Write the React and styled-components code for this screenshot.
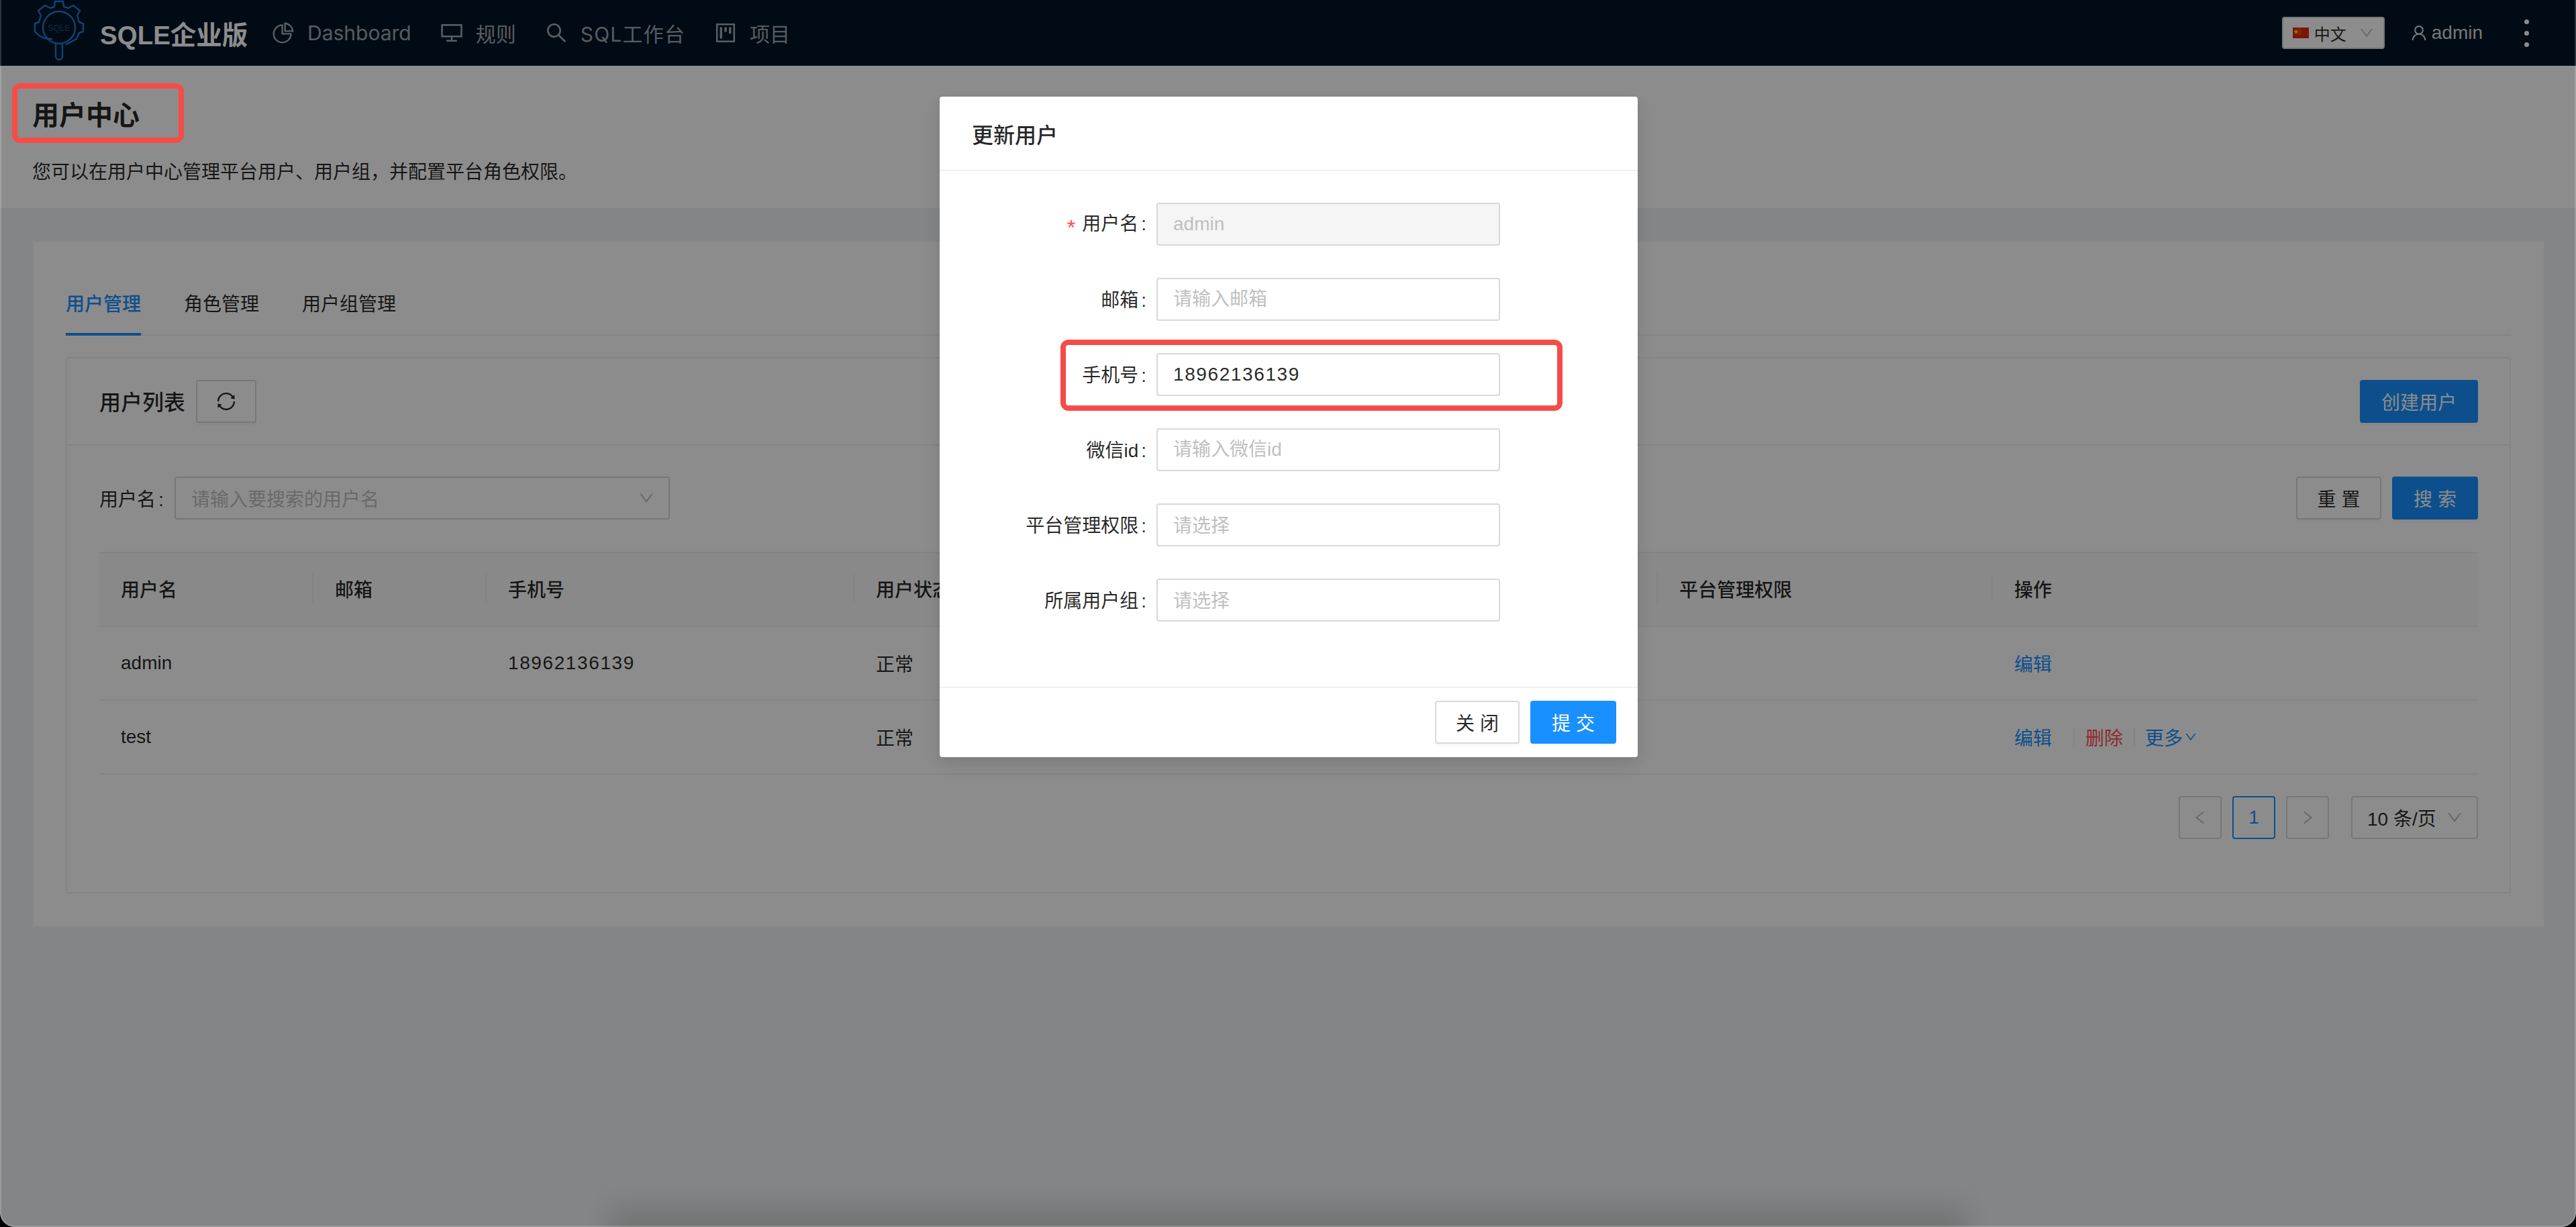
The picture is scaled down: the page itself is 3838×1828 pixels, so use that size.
import React from "react";
import styled, { createGlobalStyle } from "styled-components";
import {
  AiOutlinePieChart,
  AiOutlineDesktop,
  AiOutlineSearch,
  AiOutlineProject,
  AiOutlineUser,
  AiOutlineSync,
  AiOutlineDown,
  AiOutlineLeft,
  AiOutlineRight,
} from "react-icons/ai";

const GlobalStyle = createGlobalStyle`
  html, body {
    margin: 0;
    padding: 0;
    background: #000;
  }
  * {
    box-sizing: border-box;
  }
  body {
    font-family: "Liberation Sans", "Noto Sans CJK SC", sans-serif;
    font-size: 28px;
    color: rgba(0, 0, 0, 0.85);
  }
`;

const Page = styled.div`
  position: relative;
  width: 3838px;
  height: 1828px;
  overflow: hidden;
  background: #f0f2f5;
  border-radius: 0 0 22px 22px;
`;

const Header = styled.header`
  height: 98px;
  background: #001529;
  display: flex;
  align-items: center;
  padding: 0 70px 0 48px;
`;

const Brand = styled.div`
  display: flex;
  align-items: center;
  gap: 21px;
  width: 356px;
  font-size: 38.5px;
  font-weight: 700;
  color: #fff;
  white-space: nowrap;
  svg {
    margin-top: -6px;
  }
`;

const Nav = styled.nav`
  display: flex;
  align-items: center;
  gap: 42px;
`;

const NavItem = styled.div`
  display: flex;
  align-items: center;
  gap: 18px;
  font-family: Inter, "Noto Sans CJK SC", sans-serif;
  font-size: 30px;
  letter-spacing: ${({ $tracking }) => $tracking || 0}px;
  color: rgba(255, 255, 255, 0.65);
  white-space: nowrap;
  svg {
    font-size: 36px;
  }
`;

const HeaderRight = styled.div`
  margin-left: auto;
  display: flex;
  align-items: center;
`;

const LangSelect = styled.div`
  width: 153px;
  height: 48px;
  background: #fff;
  border: 2px solid #d9d9d9;
  border-radius: 4px;
  display: flex;
  align-items: center;
  padding-left: 14px;
  font-size: 24px;
  color: rgba(0, 0, 0, 0.85);
  gap: 8px;
  svg.chevron {
    margin-left: 10px;
    font-size: 24px;
    color: #bfbfbf;
  }
`;

const UserInfo = styled.div`
  margin-left: 37px;
  display: flex;
  align-items: center;
  gap: 5px;
  font-size: 28px;
  color: rgba(255, 255, 255, 0.85);
  svg {
    font-size: 28px;
  }
`;

const MoreDots = styled.div`
  margin-left: 62px;
  display: flex;
  flex-direction: column;
  gap: 10px;
  span {
    width: 7px;
    height: 7px;
    border-radius: 50%;
    background: #fff;
  }
`;

const PageHeader = styled.section`
  height: 212px;
  background: #fff;
  padding: 50px 48px 0;
`;

const PageTitle = styled.h1`
  margin: 0;
  font-size: 40px;
  line-height: 48px;
  font-weight: 600;
`;

const PageDesc = styled.p`
  margin: 39px 0 0;
  font-size: 28px;
  line-height: 44px;
  color: rgba(0, 0, 0, 0.85);
`;

const Content = styled.main`
  padding: 50px 48px 0 50px;
`;

const Card = styled.section`
  height: 1020px;
  background: #fff;
  padding: 0 49px 0 48px;
`;

const Tabs = styled.div`
  height: 140px;
  display: flex;
  gap: 64px;
  align-items: flex-end;
  border-bottom: 2px solid #f0f0f0;
`;

const Tab = styled.div`
  height: 70px;
  margin-bottom: -2px;
  font-size: 28px;
  line-height: 48px;
  color: ${({ $active }) => ($active ? "#1890ff" : "rgba(0,0,0,.85)")};
  font-weight: ${({ $active }) => ($active ? 500 : 400)};
  border-bottom: 4px solid ${({ $active }) => ($active ? "#1890ff" : "transparent")};
`;

const InnerCard = styled.div`
  margin-top: 32px;
  height: 799px;
  border: 2px solid #f0f0f0;
  border-radius: 4px;
`;

const InnerHead = styled.div`
  height: 130px;
  padding: 0 47px 0 48px;
  display: flex;
  align-items: center;
  border-bottom: 2px solid #f0f0f0;
`;

const InnerTitle = styled.div`
  font-size: 32px;
  font-weight: 500;
  margin: -3px 16px 0 0;
`;

const Button = styled.div`
  height: 64px;
  width: ${({ $w }) => $w}px;
  display: flex;
  align-items: center;
  justify-content: center;
  border-radius: 4px;
  font-size: 28px;
  white-space: nowrap;
  border: 2px solid ${({ $primary }) => ($primary ? "#1890ff" : "#d9d9d9")};
  background: ${({ $primary }) => ($primary ? "#1890ff" : "#fff")};
  color: ${({ $primary }) => ($primary ? "#fff" : "rgba(0,0,0,.85)")};
  box-shadow: 0 4px 0 rgba(0, 0, 0, 0.02);
  svg {
    font-size: 32px;
  }
`;

const CreateButton = styled(Button)`
  margin-left: auto;
`;

const InnerBody = styled.div`
  padding: 46px 47px 0 48px;
`;

const FilterRow = styled.div`
  display: flex;
  align-items: center;
  height: 64px;
  gap: 16px;
`;

const FilterLabel = styled.div`
  width: 96px;
  font-size: 28px;
  white-space: nowrap;
  &::after {
    content: ":";
    margin-left: 4px;
  }
`;

const SelectBox = styled.div`
  width: 738px;
  height: 64px;
  border: 2px solid #d9d9d9;
  border-radius: 4px;
  display: flex;
  align-items: center;
  justify-content: space-between;
  padding: 0 20px 0 23px;
  color: #bfbfbf;
  font-size: 28px;
  svg {
    font-size: 26px;
  }
`;

const FilterActions = styled.div`
  margin-left: auto;
  display: flex;
  gap: 16px;
`;

const Table = styled.div`
  margin-top: 48px;
  border-top: 2px solid #f0f0f0;
`;

const TableRow = styled.div`
  display: grid;
  grid-template-columns: 319px 258px 548px 1197px 499px 723px;
  height: 110px;
  align-items: center;
  background: ${({ $head }) => ($head ? "#fafafa" : "transparent")};
  border-bottom: 2px solid #f0f0f0;
  font-weight: ${({ $head }) => ($head ? 500 : 400)};
`;

const Cell = styled.div`
  position: relative;
  padding-left: 32px;
  font-size: 28px;
  white-space: nowrap;
  display: flex;
  align-items: center;
`;

const HeadCell = styled(Cell)`
  margin-top: -3px;
  ${({ $sep }) =>
    $sep
      ? `&::before {
    content: "";
    position: absolute;
    left: -2px;
    top: -3px;
    width: 2px;
    height: 44px;
    background: #f0f0f0;
  }`
      : ""}
`;

const PhoneText = styled.span`
  letter-spacing: 1.6px;
`;

const ActionLink = styled.span`
  color: ${({ $danger }) => ($danger ? "#ff4d4f" : "#1890ff")};
  display: inline-flex;
  align-items: center;
  svg {
    font-size: 20px;
    margin-left: 2px;
  }
`;

const ActionDivider = styled.span`
  width: 2px;
  height: 26px;
  background: #f0f0f0;
  margin: 0 16px 0 32px;
`;

const ActionDividerTight = styled(ActionDivider)`
  margin: 0 15px 0 16px;
`;

const Pagination = styled.div`
  margin-top: 32px;
  display: flex;
  justify-content: flex-end;
  align-items: center;
`;

const PageBox = styled.div`
  width: 64px;
  height: 64px;
  margin-right: 16px;
  border-radius: 4px;
  display: flex;
  align-items: center;
  justify-content: center;
  border: 2px solid ${({ $active }) => ($active ? "#1890ff" : "#d9d9d9")};
  color: ${({ $active }) => ($active ? "#1890ff" : "#bfbfbf")};
  font-weight: ${({ $active }) => ($active ? 500 : 400)};
  font-size: 28px;
  svg {
    font-size: 26px;
  }
`;

const PageSize = styled.div`
  margin-left: 17px;
  width: 189px;
  height: 64px;
  border: 2px solid #d9d9d9;
  border-radius: 4px;
  display: flex;
  align-items: center;
  justify-content: space-between;
  padding: 0 20px 0 22px;
  font-size: 28px;
  svg {
    font-size: 26px;
    color: #bfbfbf;
  }
`;

const Mask = styled.div`
  position: absolute;
  inset: 0;
  background: rgba(0, 0, 0, 0.45);
  display: flex;
  justify-content: center;
  align-items: flex-start;
  padding: 144px 0 0 2px;
`;

const Modal = styled.div`
  width: 1040px;
  height: 984px;
  background: #fff;
  border-radius: 4px;
  display: flex;
  flex-direction: column;
  box-shadow: 0 6px 16px rgba(0, 0, 0, 0.08), 0 12px 32px rgba(0, 0, 0, 0.05);
`;

const ModalHead = styled.div`
  height: 111px;
  padding: 0 48px;
  display: flex;
  align-items: center;
  font-size: 32px;
  font-weight: 500;
  border-bottom: 2px solid #f0f0f0;
`;

const ModalForm = styled.div`
  flex: 1;
  padding-top: 47px;
  display: flex;
  flex-direction: column;
  gap: 48px;
`;

const FormRow = styled.div`
  display: flex;
  align-items: center;
  height: 64px;
`;

const FormLabel = styled.div`
  width: 308px;
  margin: -2px 15px 0 0;
  text-align: right;
  font-size: 28px;
  white-space: nowrap;
  &::after {
    content: ":";
    margin-left: 4px;
  }
`;

const Required = styled.span`
  display: inline-block;
  vertical-align: -7px;
  line-height: 1;
  color: #ff4d4f;
  margin-right: 10px;
  font-size: 32px;
`;

const TextInput = styled.input`
  width: 512px;
  height: 64px;
  padding: 0 23px;
  border: 2px solid #d9d9d9;
  border-radius: 4px;
  outline: none;
  font: inherit;
  font-size: 28px;
  letter-spacing: ${({ $tracking }) => $tracking || 0}px;
  color: rgba(0, 0, 0, 0.85);
  background: #fff;
  &::placeholder {
    color: #bfbfbf;
    opacity: 1;
  }
  &:disabled {
    background: #f5f5f5;
    color: #bfbfbf;
  }
`;

const SelectField = styled.div`
  width: 512px;
  height: 64px;
  padding: 0 23px 3px;
  border: 2px solid #d9d9d9;
  border-radius: 4px;
  display: flex;
  align-items: center;
  font-size: 28px;
  color: #bfbfbf;
`;

const ModalFoot = styled.div`
  height: 105px;
  padding: 19px 32px 0;
  display: flex;
  justify-content: flex-end;
  gap: 16px;
  border-top: 2px solid #f0f0f0;
`;

const Annotation = styled.div`
  position: absolute;
  left: ${({ $x }) => $x}px;
  top: ${({ $y }) => $y}px;
  width: ${({ $w }) => $w}px;
  height: ${({ $h }) => $h}px;
  border: 8px solid #f64c47;
  border-radius: 12px;
`;

const WindowEdge = styled.div`
  position: absolute;
  inset: 0;
  border: 2px solid rgba(255, 255, 255, 0.18);
  border-top: none;
  border-radius: 0 0 22px 22px;
  pointer-events: none;
`;

const BottomShadow = styled.div`
  position: absolute;
  left: 930px;
  right: 929px;
  bottom: -30px;
  height: 30px;
  box-shadow: 0 -8px 40px 20px rgba(0, 0, 0, 0.14);
`;

const Logo = () => (
  <svg width="80" height="92" viewBox="0 0 80 92" fill="none">
    <g stroke="#1a7fd0" strokeWidth="2.4" strokeLinejoin="round" strokeLinecap="round">
      <path d="M29 58 A30 30 0 0 1 4 47 V35 L10 33 L13 23 L9 16 L19 8 L27 12 L33 10 L34 2 H46 L47 10 L54 12 L61 8 L71 16 L67 23 L70 33 L76 35 V47 L70 49 L66 58 L51 66" />
      <circle cx="40" cy="41" r="24" />
      <path d="M35 65 V84 A5 5 0 0 0 45 84 V65" />
    </g>
    <text x="40" y="46" textAnchor="middle" fontSize="12.5" fontWeight="400" fill="#1d4f78">SQLE</text>
  </svg>
);

const Flag = () => (
  <svg width="24" height="16" viewBox="0 0 24 16">
    <rect width="24" height="16" fill="#de2910" />
    <polygon points="5,2 6,5 9,5 6.6,6.9 7.5,10 5,8 2.5,10 3.4,6.9 1,5 4,5" fill="#ffde00" />
    <circle cx="10" cy="2.5" r="0.8" fill="#ffde00" />
    <circle cx="12" cy="5" r="0.8" fill="#ffde00" />
    <circle cx="12" cy="8" r="0.8" fill="#ffde00" />
    <circle cx="10" cy="10.5" r="0.8" fill="#ffde00" />
  </svg>
);

const navItems = [
  { icon: <AiOutlinePieChart />, label: "Dashboard" },
  { icon: <AiOutlineDesktop />, label: "规则" },
  { icon: <AiOutlineSearch />, label: "SQL工作台", tracking: 1.2 },
  { icon: <AiOutlineProject />, label: "项目" },
];

const App = () => {
  return (
    <Page>
      <GlobalStyle />
      <Header>
        <Brand>
          <Logo />
          SQLE企业版
        </Brand>
        <Nav>
          {navItems.map((item) => (
            <NavItem key={item.label} $tracking={item.tracking}>
              {item.icon}
              {item.label}
            </NavItem>
          ))}
        </Nav>
        <HeaderRight>
          <LangSelect>
            <Flag />
            中文
            <AiOutlineDown className="chevron" />
          </LangSelect>
          <UserInfo>
            <AiOutlineUser />
            admin
          </UserInfo>
          <MoreDots>
            <span />
            <span />
            <span />
          </MoreDots>
        </HeaderRight>
      </Header>

      <PageHeader>
        <PageTitle>用户中心</PageTitle>
        <PageDesc>您可以在用户中心管理平台用户、用户组，并配置平台角色权限。</PageDesc>
      </PageHeader>

      <Content>
        <Card>
          <Tabs>
            <Tab $active>用户管理</Tab>
            <Tab>角色管理</Tab>
            <Tab>用户组管理</Tab>
          </Tabs>
          <InnerCard>
            <InnerHead>
              <InnerTitle>用户列表</InnerTitle>
              <Button $w={90}>
                <AiOutlineSync />
              </Button>
              <CreateButton $primary $w={176}>
                创建用户
              </CreateButton>
            </InnerHead>
            <InnerBody>
              <FilterRow>
                <FilterLabel>用户名</FilterLabel>
                <SelectBox>
                  请输入要搜索的用户名
                  <AiOutlineDown />
                </SelectBox>
                <FilterActions>
                  <Button $w={127}>重 置</Button>
                  <Button $primary $w={128}>
                    搜 索
                  </Button>
                </FilterActions>
              </FilterRow>
              <Table>
                <TableRow $head>
                  <HeadCell>用户名</HeadCell>
                  <HeadCell $sep>邮箱</HeadCell>
                  <HeadCell $sep>手机号</HeadCell>
                  <HeadCell $sep>用户状态</HeadCell>
                  <HeadCell $sep>平台管理权限</HeadCell>
                  <HeadCell $sep>操作</HeadCell>
                </TableRow>
                <TableRow>
                  <Cell>admin</Cell>
                  <Cell />
                  <Cell>
                    <PhoneText>18962136139</PhoneText>
                  </Cell>
                  <Cell>正常</Cell>
                  <Cell />
                  <Cell>
                    <ActionLink>编辑</ActionLink>
                  </Cell>
                </TableRow>
                <TableRow>
                  <Cell>test</Cell>
                  <Cell />
                  <Cell />
                  <Cell>正常</Cell>
                  <Cell />
                  <Cell>
                    <ActionLink>编辑</ActionLink>
                    <ActionDivider />
                    <ActionLink $danger>删除</ActionLink>
                    <ActionDividerTight />
                    <ActionLink>
                      更多
                      <AiOutlineDown />
                    </ActionLink>
                  </Cell>
                </TableRow>
              </Table>
              <Pagination>
                <PageBox>
                  <AiOutlineLeft />
                </PageBox>
                <PageBox $active>1</PageBox>
                <PageBox>
                  <AiOutlineRight />
                </PageBox>
                <PageSize>
                  10 条/页
                  <AiOutlineDown />
                </PageSize>
              </Pagination>
            </InnerBody>
          </InnerCard>
        </Card>
      </Content>

      <Mask>
        <Modal>
          <ModalHead>更新用户</ModalHead>
          <ModalForm>
            <FormRow>
              <FormLabel>
                <Required>*</Required>用户名
              </FormLabel>
              <TextInput disabled defaultValue="admin" />
            </FormRow>
            <FormRow>
              <FormLabel>邮箱</FormLabel>
              <TextInput placeholder="请输入邮箱" />
            </FormRow>
            <FormRow>
              <FormLabel>手机号</FormLabel>
              <TextInput $tracking={1.6} defaultValue="18962136139" />
            </FormRow>
            <FormRow>
              <FormLabel>微信id</FormLabel>
              <TextInput placeholder="请输入微信id" />
            </FormRow>
            <FormRow>
              <FormLabel>平台管理权限</FormLabel>
              <SelectField>请选择</SelectField>
            </FormRow>
            <FormRow>
              <FormLabel>所属用户组</FormLabel>
              <SelectField>请选择</SelectField>
            </FormRow>
          </ModalForm>
          <ModalFoot>
            <Button $w={126}>关 闭</Button>
            <Button $primary $w={128}>
              提 交
            </Button>
          </ModalFoot>
        </Modal>
      </Mask>

      <Annotation $x={18} $y={124} $w={256} $h={89} />
      <Annotation $x={1580} $y={506} $w={748} $h={106} />
      <BottomShadow />
      <WindowEdge />
    </Page>
  );
};

export default App;
